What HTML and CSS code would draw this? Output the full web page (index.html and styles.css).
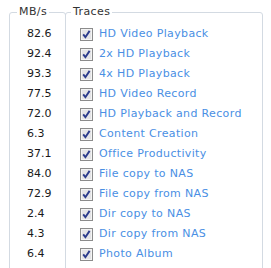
FILE: index.html
```html
<!DOCTYPE html>
<html>
<head>
<meta charset="utf-8">
<link rel="stylesheet" href="styles.css">
</head>
<body>
<div class="wrap">
  <fieldset class="box box-rates">
    <legend class="title title-rates">MB/s</legend>
    <div class="rates">
      <div class="rate">82.6</div>
      <div class="rate">92.4</div>
      <div class="rate">93.3</div>
      <div class="rate">77.5</div>
      <div class="rate">72.0</div>
      <div class="rate">6.3</div>
      <div class="rate">37.1</div>
      <div class="rate">84.0</div>
      <div class="rate">72.9</div>
      <div class="rate">2.4</div>
      <div class="rate">4.3</div>
      <div class="rate">6.4</div>
    </div>
  </fieldset>
  <fieldset class="box box-traces">
    <legend class="title title-traces">Traces</legend>
    <div class="traces">
      <label class="trace"><span class="cb"><svg width="13" height="13" viewBox="0 0 13 13"><rect x="0.5" y="0.5" width="12" height="12" fill="#d6d6d6" stroke="#8c8c8c"/><rect x="1.5" y="1.5" width="10" height="10" fill="#e4e4e6" stroke="#f4f4f4"/><path d="M3.2 6.4 L5.4 9.2 L9.6 2.9" fill="none" stroke="#2b3b8c" stroke-width="1.9"/></svg></span><span class="name">HD Video Playback</span></label>
      <label class="trace"><span class="cb"><svg width="13" height="13" viewBox="0 0 13 13"><rect x="0.5" y="0.5" width="12" height="12" fill="#d6d6d6" stroke="#8c8c8c"/><rect x="1.5" y="1.5" width="10" height="10" fill="#e4e4e6" stroke="#f4f4f4"/><path d="M3.2 6.4 L5.4 9.2 L9.6 2.9" fill="none" stroke="#2b3b8c" stroke-width="1.9"/></svg></span><span class="name">2x HD Playback</span></label>
      <label class="trace"><span class="cb"><svg width="13" height="13" viewBox="0 0 13 13"><rect x="0.5" y="0.5" width="12" height="12" fill="#d6d6d6" stroke="#8c8c8c"/><rect x="1.5" y="1.5" width="10" height="10" fill="#e4e4e6" stroke="#f4f4f4"/><path d="M3.2 6.4 L5.4 9.2 L9.6 2.9" fill="none" stroke="#2b3b8c" stroke-width="1.9"/></svg></span><span class="name">4x HD Playback</span></label>
      <label class="trace"><span class="cb"><svg width="13" height="13" viewBox="0 0 13 13"><rect x="0.5" y="0.5" width="12" height="12" fill="#d6d6d6" stroke="#8c8c8c"/><rect x="1.5" y="1.5" width="10" height="10" fill="#e4e4e6" stroke="#f4f4f4"/><path d="M3.2 6.4 L5.4 9.2 L9.6 2.9" fill="none" stroke="#2b3b8c" stroke-width="1.9"/></svg></span><span class="name">HD Video Record</span></label>
      <label class="trace"><span class="cb"><svg width="13" height="13" viewBox="0 0 13 13"><rect x="0.5" y="0.5" width="12" height="12" fill="#d6d6d6" stroke="#8c8c8c"/><rect x="1.5" y="1.5" width="10" height="10" fill="#e4e4e6" stroke="#f4f4f4"/><path d="M3.2 6.4 L5.4 9.2 L9.6 2.9" fill="none" stroke="#2b3b8c" stroke-width="1.9"/></svg></span><span class="name">HD Playback and Record</span></label>
      <label class="trace"><span class="cb"><svg width="13" height="13" viewBox="0 0 13 13"><rect x="0.5" y="0.5" width="12" height="12" fill="#d6d6d6" stroke="#8c8c8c"/><rect x="1.5" y="1.5" width="10" height="10" fill="#e4e4e6" stroke="#f4f4f4"/><path d="M3.2 6.4 L5.4 9.2 L9.6 2.9" fill="none" stroke="#2b3b8c" stroke-width="1.9"/></svg></span><span class="name">Content Creation</span></label>
      <label class="trace"><span class="cb"><svg width="13" height="13" viewBox="0 0 13 13"><rect x="0.5" y="0.5" width="12" height="12" fill="#d6d6d6" stroke="#8c8c8c"/><rect x="1.5" y="1.5" width="10" height="10" fill="#e4e4e6" stroke="#f4f4f4"/><path d="M3.2 6.4 L5.4 9.2 L9.6 2.9" fill="none" stroke="#2b3b8c" stroke-width="1.9"/></svg></span><span class="name">Office Productivity</span></label>
      <label class="trace"><span class="cb"><svg width="13" height="13" viewBox="0 0 13 13"><rect x="0.5" y="0.5" width="12" height="12" fill="#d6d6d6" stroke="#8c8c8c"/><rect x="1.5" y="1.5" width="10" height="10" fill="#e4e4e6" stroke="#f4f4f4"/><path d="M3.2 6.4 L5.4 9.2 L9.6 2.9" fill="none" stroke="#2b3b8c" stroke-width="1.9"/></svg></span><span class="name">File copy to NAS</span></label>
      <label class="trace"><span class="cb"><svg width="13" height="13" viewBox="0 0 13 13"><rect x="0.5" y="0.5" width="12" height="12" fill="#d6d6d6" stroke="#8c8c8c"/><rect x="1.5" y="1.5" width="10" height="10" fill="#e4e4e6" stroke="#f4f4f4"/><path d="M3.2 6.4 L5.4 9.2 L9.6 2.9" fill="none" stroke="#2b3b8c" stroke-width="1.9"/></svg></span><span class="name">File copy from NAS</span></label>
      <label class="trace"><span class="cb"><svg width="13" height="13" viewBox="0 0 13 13"><rect x="0.5" y="0.5" width="12" height="12" fill="#d6d6d6" stroke="#8c8c8c"/><rect x="1.5" y="1.5" width="10" height="10" fill="#e4e4e6" stroke="#f4f4f4"/><path d="M3.2 6.4 L5.4 9.2 L9.6 2.9" fill="none" stroke="#2b3b8c" stroke-width="1.9"/></svg></span><span class="name">Dir copy to NAS</span></label>
      <label class="trace"><span class="cb"><svg width="13" height="13" viewBox="0 0 13 13"><rect x="0.5" y="0.5" width="12" height="12" fill="#d6d6d6" stroke="#8c8c8c"/><rect x="1.5" y="1.5" width="10" height="10" fill="#e4e4e6" stroke="#f4f4f4"/><path d="M3.2 6.4 L5.4 9.2 L9.6 2.9" fill="none" stroke="#2b3b8c" stroke-width="1.9"/></svg></span><span class="name">Dir copy from NAS</span></label>
      <label class="trace"><span class="cb"><svg width="13" height="13" viewBox="0 0 13 13"><rect x="0.5" y="0.5" width="12" height="12" fill="#d6d6d6" stroke="#8c8c8c"/><rect x="1.5" y="1.5" width="10" height="10" fill="#e4e4e6" stroke="#f4f4f4"/><path d="M3.2 6.4 L5.4 9.2 L9.6 2.9" fill="none" stroke="#2b3b8c" stroke-width="1.9"/></svg></span><span class="name">Photo Album</span></label>
    </div>
  </fieldset>
</div>
</body>
</html>
```

FILE: styles.css
```css
html, body {
  margin: 0;
  padding: 0;
  overflow: hidden;
  background: #ffffff;
}

body {
  font-family: "DejaVu Sans", Verdana, sans-serif;
  font-size: 11px;
  color: #222222;
}

.wrap {
  display: flex;
  align-items: flex-start;
  padding: 6px 0 0 9px;
}

.box {
  margin: 0;
  padding: 6px 0 12px 0;
  border: 1px solid #d3dae2;
  border-radius: 3px;
  min-width: 0;
}

.box-rates {
  width: 57px;
  box-sizing: border-box;
}

.box-traces {
  width: 198px;
  box-sizing: border-box;
  margin-left: -1px;
}

.title {
  padding: 0 2px;
  line-height: 12px;
  color: #333333;
  letter-spacing: 0.4px;
}

.title-rates {
  margin-left: 7px;
}

.title-traces {
  margin-left: 5px;
}

.rates {
  padding-left: 17px;
}

.rate {
  height: 20px;
  line-height: 20px;
  color: #1a1a1a;
}

.traces {
  padding-left: 14px;
}

.trace {
  display: flex;
  align-items: center;
  height: 20px;
  line-height: 20px;
  white-space: nowrap;
}

.cb {
  display: block;
  width: 13px;
  height: 13px;
  margin-right: 6px;
}

.cb svg {
  display: block;
}

.name {
  color: #4a8fe4;
  letter-spacing: 0.35px;
}
```
